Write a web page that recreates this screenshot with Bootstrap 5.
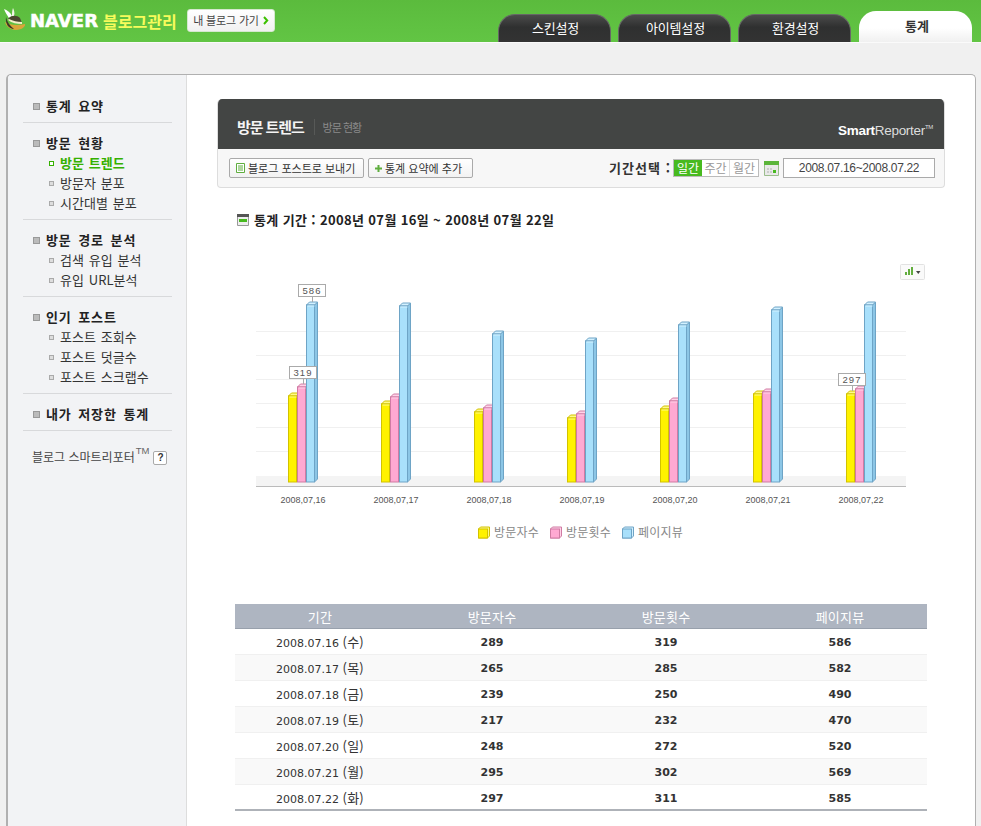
<!DOCTYPE html>
<html lang="ko">
<head>
<meta charset="utf-8">
<title>NAVER 블로그관리 - 방문 트렌드</title>
<link rel="stylesheet" href="https://cdn.jsdelivr.net/npm/bootstrap@5.3.0/dist/css/bootstrap.min.css">
<style>
body{background:#f0f0f0;font-family:"Noto Sans CJK KR","Liberation Sans",sans-serif;font-size:12px;color:#333;line-height:20px}
.top-bar{height:43px;background:linear-gradient(#5bbb3d,#62c544);border-bottom:1px solid #fafafa;padding-left:3px}
.brand-hat{margin-top:8px;width:24px;height:24px;flex:none}
.brand-naver{font-family:"DejaVu Sans",sans-serif;font-weight:700;font-size:18px;color:#fff;margin:0 5px 0 3px;letter-spacing:.05px;-webkit-text-stroke:.5px #fff;line-height:42px;width:68px;white-space:nowrap}
.brand-name{font-weight:700;font-size:16px;color:#f7fb5c;line-height:42px;width:73px;white-space:nowrap}
.home-btn{height:23px;width:88px;margin:9px 0 0 11px;padding:0;background:linear-gradient(#fff,#f1f1f1);border:1px solid #d5e8cf;border-radius:3px;font-size:11px;line-height:21px;color:#444;white-space:nowrap;letter-spacing:-.15px;display:flex;align-items:center;justify-content:center;gap:4px}
.home-btn:hover{background:#fff}
.tab-row{margin-left:auto;margin-right:9px;gap:7px;align-items:flex-end;height:42px}
.tab-dark,.tab-light{display:block;width:113px;padding:0;text-align:center;border-radius:17px 17px 0 0}
.tab-dark{height:28px;background:linear-gradient(#4b4b4b,#2f3030 45%,#333);border:1px solid #666;border-bottom:0;color:#fff;font-size:13px;line-height:25px;padding-left:2px;letter-spacing:-.2px}
.tab-light{height:31px;margin-left:1px;background:linear-gradient(#fff 55%,#f0f0f0);color:#333;font-weight:700;font-size:13px;line-height:30px;padding-left:3px}
.tab-dark:hover{color:#fff}.tab-light:hover{color:#333}
.shell{margin:31px 5px 0 6px;height:752px;background:#fff;border:1px solid #b0b0b0;border-bottom:0;border-left-width:2px;border-radius:5px 5px 0 0;overflow:hidden}
.side-col{width:179px;flex:none;background:#f2f3f5;border-right:1px solid #ddd;padding-top:21px}
.side-group{margin:0 14px 0 15px;padding:0 0 6px;border-bottom:1px solid #d8d9db;margin-bottom:10px}
.side-head,.side-sub{display:flex;align-items:center;height:20px;color:#333;text-decoration:none;white-space:nowrap}
.side-head{font-weight:700;font-size:13px;letter-spacing:.9px;color:#222;word-spacing:2px}
.side-sub{font-size:13px;letter-spacing:.05px;word-spacing:1px}
.side-head::before{content:"";width:7px;height:7px;background:#bbb;border:1px solid #999;margin:0 6px 0 10px;flex:none}
.side-sub::before{content:"";width:5px;height:5px;background:#ddd;border:1px solid #aaa;margin:0 6px 0 26px;flex:none}
.side-sub.is-on{color:#35b000;font-weight:700}
.side-sub.is-on::before{background:#fff;border:1px solid #35b000}
.side-foot{margin:16px 0 0 24px;font-size:12px;color:#444;white-space:nowrap;display:flex;align-items:center}
.side-foot sup{font-size:9.500px;font-family:"Liberation Sans",sans-serif;color:#666;top:-.6em;margin:0 4px 0 1px}
.help-box{display:inline-block;width:14px;height:14px;border:1px solid #aaa;border-radius:2px;font-family:"Liberation Sans",sans-serif;font-weight:700;font-size:10px;line-height:12px;text-align:center;margin-top:2px;color:#333;background:#fff}
.main-col{padding:24px 0 0 30px;min-width:0}
.panel-box{width:728px;border-radius:5px 5px 4px 4px;border:1px solid #ddd;border-top:0;background:#f7f7f7;overflow:hidden}
.panel-title{height:50px;margin:0 -1px;background:#434544;color:#fff;padding:0 12px 0 20px}
.title-main{font-weight:700;font-size:15px;letter-spacing:-1.1px;line-height:56px;color:#f4f4f4}
.title-sub{font-size:11px;color:#8b8b8b;border-left:1px solid #575957;line-height:16px;padding-left:8px;margin:20px 0 0 10px;height:16px;letter-spacing:-1px}
.title-logo{margin-left:auto;margin-top:15px;font-family:"Liberation Sans",sans-serif;font-size:13.5px;color:#ddd;line-height:26px;letter-spacing:-.3px}
.title-logo b{color:#fff}.title-logo i{font-style:normal;font-size:6px;vertical-align:6px}
.panel-tools{height:38px;padding:0 9px 0 11px}
.tool-btn{height:20px;padding:0 0 0 6px;background:linear-gradient(#fff,#f2f2f2);border:1px solid #aaa;border-radius:2px;font-size:11px;line-height:18px;color:#333;white-space:nowrap;display:inline-flex;align-items:center;gap:3px;margin-right:4px;--bs-btn-border-radius:2px}
.tool-btn:hover{background:#fff;border-color:#aaa;color:#333}
.tool-one{width:135px}.tool-two{width:105px}
.range-label{margin-left:auto;font-weight:700;font-size:13px;letter-spacing:1.05px;color:#333;margin-right:2px;white-space:nowrap}
.range-seg{height:18px;border:1px solid #bbb;background:#fff;display:flex;margin-right:5px}
.range-seg span{width:28px;text-align:center;font-size:12px;line-height:16px;color:#999;border-right:1px solid #ddd;white-space:nowrap}
.range-seg span:last-child{border-right:0}
.range-seg .on{background:#47ba1f;color:#fff;border:0}
.range-date{width:152px;height:20px;border:1px solid #aaa;background:#fff;text-align:center;line-height:18px;margin-left:4px;font-family:"Liberation Sans",sans-serif;font-size:12px;letter-spacing:-.32px;color:#444}
.period-line{margin:20px 0 0 20px;height:24px;display:flex;align-items:center;gap:5px;font-weight:700;font-size:13px;letter-spacing:.36px;color:#222;white-space:nowrap}
.period-line svg{flex:none}
.chart-box{display:block;margin:18px 0 0 18px}
.chart-box text{font-family:"Liberation Sans",sans-serif}
.stat-wrap{margin:58px 0 0 18px;width:692px}
.stat-tbl{width:692px;table-layout:fixed;margin:0;border-collapse:collapse;--bs-table-bg:transparent;border-bottom:2px solid #aeb2b8}
.stat-tbl th{height:24px;padding:0;background:#aeb5c1;color:#fff;font-weight:400;font-size:13px;text-align:center;border:0;border-bottom:1px solid #98a0ac;line-height:23px;letter-spacing:.2px}
.stat-tbl td{height:26px;padding:4px 0 0;text-align:center;font-family:"DejaVu Sans",sans-serif;font-size:11px;color:#333;border:0;border-bottom:1px solid #f0f0f0;line-height:14px;vertical-align:middle}
.stat-tbl tbody tr:last-child td{border-bottom:0}
.stat-tbl tbody tr:nth-child(even) td{background:#f9f9f9}
.stat-tbl td.num{font-weight:700;color:#333}
.stat-tbl td .wk{font-family:"Noto Sans CJK KR",sans-serif;font-size:13px;line-height:1;letter-spacing:.2px;display:inline-block}
</style>
</head>
<body>
<header class="top-bar d-flex">
  <svg class="brand-hat" viewBox="0 0 24 24" aria-hidden="true">
    <path d="M1 1c3 1 6 3 8 7l-3 2C4 7 2 4 1 1z" fill="#fff"/>
    <path d="M10 0c1 2 2 5 1 8l-2 0C9 5 9 3 10 0z" fill="#f4f4e8"/>
    <path d="M5 11c3-4 9-4 12-1l2 5c-4 0-10-1-14-4z" fill="#4a4630"/>
    <path d="M2 14c5 3 12 4 20 2 1 2-3 6-9 6-6 0-10-4-11-8z" fill="#d9a53a"/>
    <path d="M6 11c4 2 8 3 13 3l0 2c-5 0-10-1-14-4z" fill="#f3efc8"/>
    <path d="M3 9c1 5 4 9 8 12-5 0-9-5-8-12z" fill="#3d3a26"/>
  </svg>
  <span class="brand-naver">NAVER</span>
  <span class="brand-name">블로그관리</span>
  <button type="button" class="btn home-btn">내 블로그 가기
    <svg width="6" height="9" viewBox="0 0 6 9" aria-hidden="true"><path d="M1 1l3.200 3.500L1 8" fill="none" stroke="#3cc000" stroke-width="2"/></svg>
  </button>
  <ul class="nav tab-row">
    <li class="nav-item"><a class="nav-link tab-dark" href="#">스킨설정</a></li>
    <li class="nav-item"><a class="nav-link tab-dark" href="#">아이템설정</a></li>
    <li class="nav-item"><a class="nav-link tab-dark" href="#">환경설정</a></li>
    <li class="nav-item"><a class="nav-link tab-light" href="#">통계</a></li>
  </ul>
</header>

<div class="shell d-flex">
  <aside class="side-col">
    <div class="side-group"><a class="side-head" href="#">통계 요약</a></div>
    <div class="side-group">
      <a class="side-head" href="#">방문 현황</a>
      <a class="side-sub is-on" href="#">방문 트렌드</a>
      <a class="side-sub" href="#">방문자 분포</a>
      <a class="side-sub" href="#">시간대별 분포</a>
    </div>
    <div class="side-group">
      <a class="side-head" href="#">방문 경로 분석</a>
      <a class="side-sub" href="#">검색 유입 분석</a>
      <a class="side-sub" href="#">유입 URL분석</a>
    </div>
    <div class="side-group">
      <a class="side-head" href="#">인기 포스트</a>
      <a class="side-sub" href="#">포스트 조회수</a>
      <a class="side-sub" href="#">포스트 덧글수</a>
      <a class="side-sub" href="#">포스트 스크랩수</a>
    </div>
    <div class="side-group"><a class="side-head" href="#">내가 저장한 통계</a></div>
    <div class="side-foot">블로그 스마트리포터<sup>TM</sup><span class="help-box">?</span></div>
  </aside>

  <main class="main-col flex-grow-1">
    <section class="panel-box">
      <div class="panel-title d-flex">
        <span class="title-main">방문 트렌드</span>
        <span class="title-sub">방문 현황</span>
        <span class="title-logo"><b>Smart</b>Reporter<i>TM</i></span>
      </div>
      <div class="panel-tools d-flex align-items-center">
        <button type="button" class="btn tool-btn tool-one">
          <svg width="9" height="10" viewBox="0 0 9 10" aria-hidden="true"><path d="M.5.5h8v9h-8z" fill="#fff" stroke="#5fae3e"/><path d="M2 3h5M2 5h5M2 7h5" stroke="#5fae3e"/></svg>
          블로그 포스트로 보내기</button>
        <button type="button" class="btn tool-btn tool-two">
          <svg width="7" height="7" viewBox="0 0 7 7" aria-hidden="true"><path d="M2.5 0h2v2.500h2.500v2h-2.500v2.500h-2v-2.500h-2.500v-2h2.500z" fill="#5fae3e"/></svg>
          통계 요약에 추가</button>
        <span class="range-label">기간선택 :</span>
        <div class="range-seg"><span class="on">일간</span><span>주간</span><span>월간</span></div>
        <svg width="15" height="15" viewBox="0 0 15 15" aria-hidden="true"><path d="M.5.5h14v14H.5z" fill="#e9e9e9" stroke="#9bbd8d"/><path d="M0 0h15v4H0z" fill="#5bb53a"/><path d="M3 7h2v2H3zM6 7h2v2H6zM3 10h2v2H3zM6 10h2v2H6z" fill="#ccc"/><path d="M9 9h3v3H9z" fill="#47ba1f"/></svg>
        <div class="range-date">2008.07.16~2008.07.22</div>
      </div>
    </section>

    <div class="period-line">
      <svg width="12" height="12" viewBox="0 0 12 12" aria-hidden="true"><path d="M.5.500h11v11H.5z" fill="#eee" stroke="#999"/><path d="M0 0h12v3H0z" fill="#555"/><path d="M2 5h8v3H2z" fill="#47ba1f"/></svg>
      통계 기간 : 2008년 07월 16일 ~ 2008년 07월 22일
    </div>

    <svg id="trend" class="chart-box" width="692" height="296" viewBox="235 250 692 296" role="img" aria-label="방문 트렌드 막대 차트"></svg>

    <div class="stat-wrap">
      <table class="table stat-tbl">
        <colgroup><col style="width:170px"><col style="width:174px"><col style="width:174px"><col style="width:174px"></colgroup>
        <thead><tr><th>기간</th><th>방문자수</th><th>방문횟수</th><th>페이지뷰</th></tr></thead>
        <tbody>
          <tr><td>2008.07.16 <span class="wk">(수)</span></td><td class="num">289</td><td class="num">319</td><td class="num">586</td></tr>
          <tr><td>2008.07.17 <span class="wk">(목)</span></td><td class="num">265</td><td class="num">285</td><td class="num">582</td></tr>
          <tr><td>2008.07.18 <span class="wk">(금)</span></td><td class="num">239</td><td class="num">250</td><td class="num">490</td></tr>
          <tr><td>2008.07.19 <span class="wk">(토)</span></td><td class="num">217</td><td class="num">232</td><td class="num">470</td></tr>
          <tr><td>2008.07.20 <span class="wk">(일)</span></td><td class="num">248</td><td class="num">272</td><td class="num">520</td></tr>
          <tr><td>2008.07.21 <span class="wk">(월)</span></td><td class="num">295</td><td class="num">302</td><td class="num">569</td></tr>
          <tr><td>2008.07.22 <span class="wk">(화)</span></td><td class="num">297</td><td class="num">311</td><td class="num">585</td></tr>
        </tbody>
      </table>
    </div>
  </main>
</div>

<script src="https://cdn.jsdelivr.net/npm/bootstrap@5.3.0/dist/js/bootstrap.bundle.min.js"></script>
<script>
(function(){
  var data=[[289,319,586,'2008,07,16'],[265,285,582,'2008,07,17'],[239,250,490,'2008,07,18'],[217,232,470,'2008,07,19'],[248,272,520,'2008,07,20'],[295,302,569,'2008,07,21'],[297,311,585,'2008,07,22']];
  var pal=[{f:'#fff200',l:'#fffb8a',s:'#d2c200',d:'#f0e000'},{f:'#ffa9d2',l:'#ffd3e8',s:'#d07ba3',d:'#f59cc6'},{f:'#a9e0fb',l:'#d3f1ff',s:'#6ea4c6',d:'#8cc6e6'}];
  var base=482,k=0.3072,o='';
  o+='<rect x="256" y="476" width="650" height="10" fill="#f4f4f4"/>';
  [331,355,379,403,427,451].forEach(function(y){o+='<path d="M256 '+(y+.5)+'H906" stroke="#f0f0f0"/>'});
  o+='<path d="M256 486.500H906" stroke="#bbb"/>';
  function bar(x,v,c){
    var t=Math.round(base-v*k),p=pal[c],w=8,D=3;
    var r='<path d="M'+(x+w)+' '+(t+D)+'l'+D+' -'+D+'V'+(base-D)+'l-'+D+' '+D+'z" fill="'+p.d+'" stroke="'+p.s+'"/>';
    r+='<path d="M'+x+' '+(t+D)+'l'+D+' -'+D+'h'+w+'l-'+D+' '+D+'z" fill="'+p.l+'" stroke="'+p.s+'"/>';
    r+='<rect x="'+x+'" y="'+(t+D)+'" width="'+w+'" height="'+(base-t-D)+'" fill="'+p.f+'" stroke="'+p.s+'"/>';
    r+='<path d="M'+(x+1)+' '+(t+D+1)+'h'+(w-1)+'" stroke="'+p.l+'"/>';
    return r;
  }
  function tip(x,y,cx,to,txt){
    return '<path d="M'+cx+' '+(y+12)+'V'+to+'" stroke="#aaa"/><rect x="'+x+'" y="'+y+'" width="27" height="12" fill="#fff" stroke="#aaa"/><text x="'+(x+13.5)+'" y="'+(y+9.500)+'" text-anchor="middle" font-size="9.500" letter-spacing="1" fill="#555">'+txt+'</text>';
  }
  data.forEach(function(d,i){
    var x=288.5+93*i;
    o+=bar(x,d[0],0)+bar(x+9,d[1],1)+bar(x+18,d[2],2);
    o+='<text x="'+(303+93*i)+'" y="503" text-anchor="middle" font-size="9" fill="#555">'+d[3]+'</text>';
  });
  o+=tip(298.5,284.5,312.5,302,'586')+tip(289.5,366.5,303.5,384,'319')+tip(838.5,373.5,852.5,391,'297');
  o+='<rect x="900.500" y="264.500" width="24" height="15" rx="1" fill="#fafafa" stroke="#e2e2e2"/><path d="M905 275h2v-3h-2zM908 275h2v-6h-2zM911 275h2v-8h-2z" fill="#62ad3e"/><path d="M916 271h4.500l-2.200 3z" fill="#444"/>';
  [[478.5,'방문자수',0],[550.5,'방문횟수',1],[622.5,'페이지뷰',2]].forEach(function(l){
    var p=pal[l[2]],x=l[0];
    o+='<path d="M'+x+' 529l2 -2h9v9l-2 2h-9z" fill="'+p.l+'" stroke="'+p.s+'"/><rect x="'+x+'" y="529" width="9" height="9" fill="'+p.f+'" stroke="'+p.s+'"/>';
    o+='<text x="'+(x+15.5)+'" y="537" font-size="12" letter-spacing=".2" fill="#888" style="font-family:\'Noto Sans CJK KR\',sans-serif">'+l[1]+'</text>';
  });
  document.getElementById('trend').innerHTML=o;
})();
</script>
</body>
</html>
